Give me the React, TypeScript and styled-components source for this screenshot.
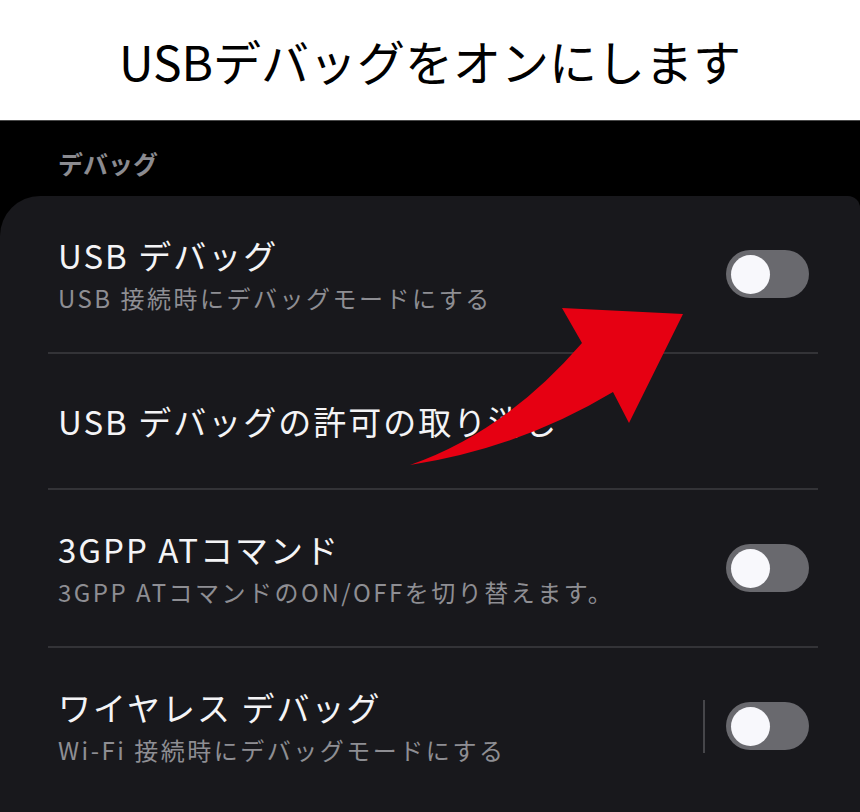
import React from "react";
import styled, { createGlobalStyle } from "styled-components";

const GlobalStyle = createGlobalStyle`
  html, body {
    margin: 0;
    padding: 0;
    background: #000;
  }
  body {
    font-family: "Noto Sans CJK JP", "Noto Sans", sans-serif;
  }
`;

const Page = styled.div`
  position: relative;
  width: 860px;
  height: 812px;
  overflow: hidden;
  background: #000;
`;

const Banner = styled.header`
  height: 120px;
  background: #fff;
  border-bottom: 1px solid #4a4a4a;
  display: flex;
  align-items: center;
  justify-content: center;
`;

const BannerTitle = styled.h1`
  margin: 0;
  font-size: 48px;
  font-weight: 400;
  letter-spacing: 0;
  color: #000;
  line-height: 1;
`;

const SectionLabel = styled.div`
  padding: 26px 58px 17px;
  font-size: 25px;
  font-weight: 700;
  line-height: 32px;
  color: #8b8b90;
`;

const Card = styled.section`
  background: #18181c;
  border-radius: 40px 12px 0 0;
  min-height: 620px;
`;

const Row = styled.div<{ $pad: number }>`
  display: flex;
  align-items: center;
  padding: ${(p) => p.$pad}px 51px ${(p) => p.$pad}px 58px;
`;

const TextBlock = styled.div`
  flex: 1;
  display: flex;
  flex-direction: column;
  gap: 6px;
  min-width: 0;
`;

const Title = styled.div`
  font-size: 33px;
  line-height: 42px;
  letter-spacing: 2px;
  color: #f4f4f6;
  white-space: nowrap;
`;

const Subtitle = styled.div`
  font-size: 24px;
  line-height: 32px;
  letter-spacing: 2.5px;
  color: #8e8e93;
  white-space: nowrap;
`;

const Divider = styled.div`
  height: 2px;
  background: #333337;
  margin: 0 42px 0 48px;
`;

const VSep = styled.div`
  width: 2px;
  height: 53px;
  background: #46464a;
  margin-right: 21px;
`;

const Track = styled.div<{ $on: boolean }>`
  position: relative;
  flex: none;
  width: 83px;
  height: 48px;
  border-radius: 24px;
  background: ${(p) => (p.$on ? "#3e91ff" : "#69696e")};
`;

const Thumb = styled.div<{ $on: boolean }>`
  position: absolute;
  top: 4.5px;
  left: ${(p) => (p.$on ? "39.5px" : "4.5px")};
  width: 39px;
  height: 39px;
  border-radius: 50%;
  background: #f8f8fc;
`;

const Overlay = styled.svg`
  position: absolute;
  top: 0;
  left: 0;
  pointer-events: none;
`;

function Toggle({ on }: { on: boolean }) {
  return (
    <Track $on={on}>
      <Thumb $on={on} />
    </Track>
  );
}

type Item = {
  title: string;
  sub?: string;
  toggle?: boolean;
  sep?: boolean;
};

const items: Item[] = [
  { title: "USB デバッグ", sub: "USB 接続時にデバッグモードにする", toggle: true },
  { title: "USB デバッグの許可の取り消し" },
  { title: "3GPP ATコマンド", sub: "3GPP ATコマンドのON/OFFを切り替えます。", toggle: true },
  { title: "ワイヤレス デバッグ", sub: "Wi-Fi 接続時にデバッグモードにする", toggle: true, sep: true },
];

export default function App() {
  return (
    <>
      <GlobalStyle />
      <Page>
        <Banner>
          <BannerTitle>USBデバッグをオンにします</BannerTitle>
        </Banner>
        <SectionLabel>デバッグ</SectionLabel>
        <Card>
          {items.map((it, i) => (
            <React.Fragment key={it.title}>
              {i > 0 && <Divider />}
              <Row $pad={it.sub ? 38 : 46}>
                <TextBlock>
                  <Title>{it.title}</Title>
                  {it.sub && <Subtitle>{it.sub}</Subtitle>}
                </TextBlock>
                {it.sep && <VSep />}
                {it.toggle && <Toggle on={false} />}
              </Row>
            </React.Fragment>
          ))}
        </Card>
        <Overlay width="860" height="812" viewBox="0 0 860 812">
          <path
            d="M410 465 Q505 432 582 343 L562 308 L683 314 L629 423 L613 392 Q520 448 410 465 Z"
            fill="#e60012"
          />
        </Overlay>
      </Page>
    </>
  );
}
